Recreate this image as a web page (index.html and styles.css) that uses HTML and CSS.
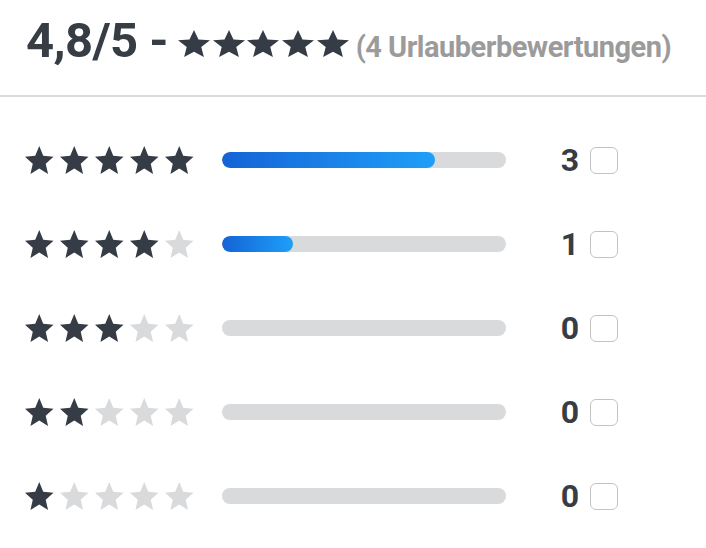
FILE: index.html
```html
<!DOCTYPE html>
<html lang="de">
<head>
<meta charset="utf-8">
<link rel="stylesheet" href="styles.css">
</head>
<body>
<svg width="0" height="0" class="defs">
  <defs>
    <polygon id="star" points="12,17.27 18.18,21 16.54,13.97 22,9.24 14.81,8.62 12,2 9.19,8.62 2,9.24 7.46,13.97 5.82,21"/>
  </defs>
</svg>
<header class="summary">
  <span class="score">4,8/5 -</span>
  <span class="head-stars">
    <svg class="hstar on" viewBox="2 2 20 19" preserveAspectRatio="none"><use href="#star"/></svg>
    <svg class="hstar on" viewBox="2 2 20 19" preserveAspectRatio="none"><use href="#star"/></svg>
    <svg class="hstar on" viewBox="2 2 20 19" preserveAspectRatio="none"><use href="#star"/></svg>
    <svg class="hstar on" viewBox="2 2 20 19" preserveAspectRatio="none"><use href="#star"/></svg>
    <svg class="hstar on" viewBox="2 2 20 19" preserveAspectRatio="none"><use href="#star"/></svg>
  </span>
  <span class="count-text">(4 Urlauberbewertungen)</span>
</header>
<div class="rows">
  <div class="row">
    <span class="stars">
      <svg class="star on" viewBox="2 2 20 19" preserveAspectRatio="none"><use href="#star"/></svg>
      <svg class="star on" viewBox="2 2 20 19" preserveAspectRatio="none"><use href="#star"/></svg>
      <svg class="star on" viewBox="2 2 20 19" preserveAspectRatio="none"><use href="#star"/></svg>
      <svg class="star on" viewBox="2 2 20 19" preserveAspectRatio="none"><use href="#star"/></svg>
      <svg class="star on" viewBox="2 2 20 19" preserveAspectRatio="none"><use href="#star"/></svg>
    </span>
    <span class="bar"><span class="fill" style="width:75%"></span></span>
    <span class="num">3</span>
    <span class="check"></span>
  </div>
  <div class="row">
    <span class="stars">
      <svg class="star on" viewBox="2 2 20 19" preserveAspectRatio="none"><use href="#star"/></svg>
      <svg class="star on" viewBox="2 2 20 19" preserveAspectRatio="none"><use href="#star"/></svg>
      <svg class="star on" viewBox="2 2 20 19" preserveAspectRatio="none"><use href="#star"/></svg>
      <svg class="star on" viewBox="2 2 20 19" preserveAspectRatio="none"><use href="#star"/></svg>
      <svg class="star off" viewBox="2 2 20 19" preserveAspectRatio="none"><use href="#star"/></svg>
    </span>
    <span class="bar"><span class="fill" style="width:25%"></span></span>
    <span class="num">1</span>
    <span class="check"></span>
  </div>
  <div class="row">
    <span class="stars">
      <svg class="star on" viewBox="2 2 20 19" preserveAspectRatio="none"><use href="#star"/></svg>
      <svg class="star on" viewBox="2 2 20 19" preserveAspectRatio="none"><use href="#star"/></svg>
      <svg class="star on" viewBox="2 2 20 19" preserveAspectRatio="none"><use href="#star"/></svg>
      <svg class="star off" viewBox="2 2 20 19" preserveAspectRatio="none"><use href="#star"/></svg>
      <svg class="star off" viewBox="2 2 20 19" preserveAspectRatio="none"><use href="#star"/></svg>
    </span>
    <span class="bar"></span>
    <span class="num">0</span>
    <span class="check"></span>
  </div>
  <div class="row">
    <span class="stars">
      <svg class="star on" viewBox="2 2 20 19" preserveAspectRatio="none"><use href="#star"/></svg>
      <svg class="star on" viewBox="2 2 20 19" preserveAspectRatio="none"><use href="#star"/></svg>
      <svg class="star off" viewBox="2 2 20 19" preserveAspectRatio="none"><use href="#star"/></svg>
      <svg class="star off" viewBox="2 2 20 19" preserveAspectRatio="none"><use href="#star"/></svg>
      <svg class="star off" viewBox="2 2 20 19" preserveAspectRatio="none"><use href="#star"/></svg>
    </span>
    <span class="bar"></span>
    <span class="num">0</span>
    <span class="check"></span>
  </div>
  <div class="row">
    <span class="stars">
      <svg class="star on" viewBox="2 2 20 19" preserveAspectRatio="none"><use href="#star"/></svg>
      <svg class="star off" viewBox="2 2 20 19" preserveAspectRatio="none"><use href="#star"/></svg>
      <svg class="star off" viewBox="2 2 20 19" preserveAspectRatio="none"><use href="#star"/></svg>
      <svg class="star off" viewBox="2 2 20 19" preserveAspectRatio="none"><use href="#star"/></svg>
      <svg class="star off" viewBox="2 2 20 19" preserveAspectRatio="none"><use href="#star"/></svg>
    </span>
    <span class="bar"></span>
    <span class="num">0</span>
    <span class="check"></span>
  </div>
</div>
</body>
</html>
```

FILE: styles.css
```css
html, body {
  margin: 0;
  padding: 0;
  background: #ffffff;
}
body {
  font-family: Roboto, "Liberation Sans", sans-serif;
  color: #363d45;
  width: 706px;
  height: 548px;
  overflow: hidden;
}
.defs {
  position: absolute;
  width: 0;
  height: 0;
}
.summary {
  display: flex;
  align-items: baseline;
  padding: 12px 24px 0 26px;
  height: 83px;
  border-bottom: 2px solid #dcdcdc;
}
.score {
  font-size: 49px;
  font-weight: 700;
  letter-spacing: -0.6px;
  line-height: 57px;
  color: #363d45;
}
.head-stars {
  display: inline-flex;
  gap: 2.7px;
  margin-left: 10px;
  margin-bottom: 5px;
}
.hstar {
  width: 32px;
  height: 27px;
  display: block;
}
.count-text {
  font-size: 29px;
  font-weight: 700;
  letter-spacing: -0.5px;
  color: #9b9b9b;
  margin-left: 7px;
}
.on { fill: #353c45; }
.off { fill: #d9dadc; }
.rows {
  display: flex;
  flex-direction: column;
  padding: 21px 0 0 25px;
}
.row {
  display: flex;
  align-items: center;
  height: 84px;
}
.stars {
  display: flex;
  gap: 6.5px;
  width: 173px;
}
.star {
  width: 28.5px;
  height: 28px;
  display: block;
}
.bar {
  display: block;
  margin-left: 24px;
  width: 284px;
  height: 16px;
  border-radius: 8px;
  background: #d9dadc;
  overflow: hidden;
}
.fill {
  display: block;
  height: 100%;
  border-radius: 8px;
  background: linear-gradient(90deg, #1463d6 0%, #1e9ff8 100%);
}
.num {
  width: 73px;
  text-align: right;
  font-size: 32px;
  font-weight: 700;
  color: #363d45;
  line-height: 1;
}
.check {
  display: block;
  box-sizing: border-box;
  margin-left: 11px;
  width: 28px;
  height: 27px;
  border: 1.5px solid #c3c3c3;
  border-radius: 6px;
  background: #fff;
}
```
